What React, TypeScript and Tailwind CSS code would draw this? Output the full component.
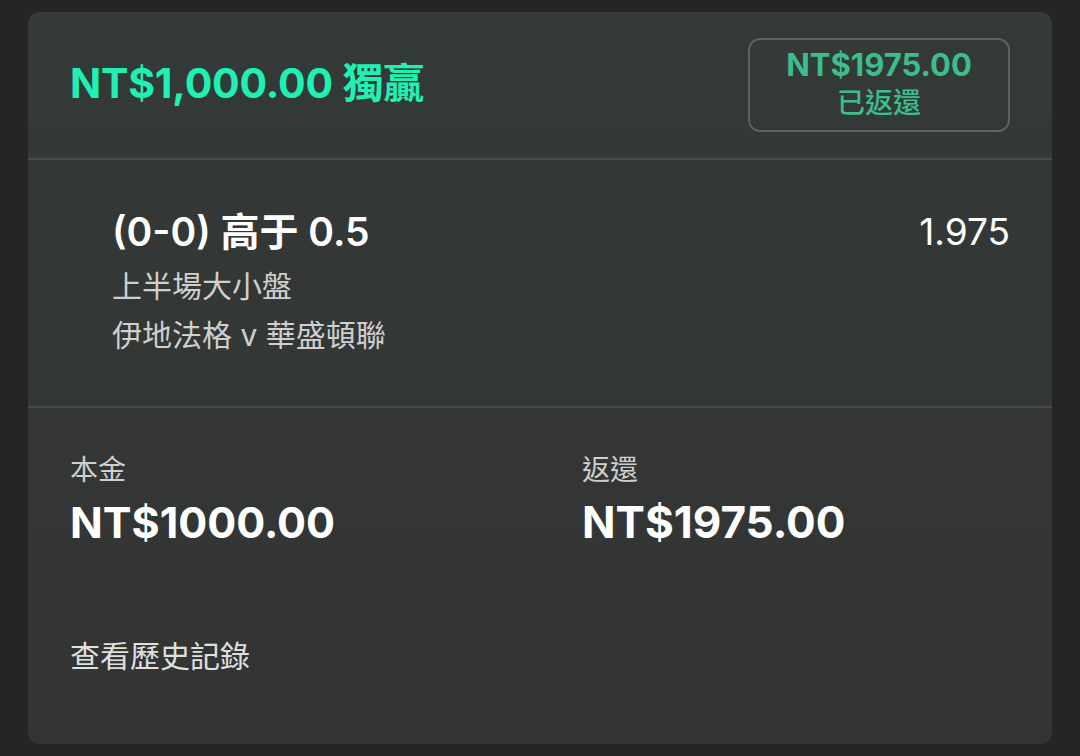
export default function App() {
  return (
    <div
      className="min-h-[756px] w-full bg-[#252525] px-[28px] pt-[12px] pb-[12px]"
      style={{ fontFamily: '"Inter", "Noto Sans CJK TC", sans-serif' }}
    >
      <div className="flex h-[732px] flex-col overflow-hidden rounded-[12px] bg-gradient-to-b from-[#333a37] to-[#333434]">
        {/* Header */}
        <div className="flex h-[148px] shrink-0 items-center justify-between border-b-2 border-[#484d4b] pl-[42px] pr-[42px]">
          <div className="-mt-[4px] text-[41px] font-bold leading-none tracking-[-0.2px] text-[#1ff0b4]">
            NT$1,000.00 獨贏
          </div>
          <div className="flex h-[94px] w-[262px] flex-col items-center justify-center rounded-[12px] border-2 border-[#5d6260]">
            <div className="-mt-[4px] text-[31px] font-bold leading-[40px] text-[#3cbd8b]">NT$1975.00</div>
            <div className="text-[28px] font-medium leading-[36px] text-[#3cbd8b]">已返還</div>
          </div>
        </div>

        {/* Selection */}
        <div className="flex h-[248px] shrink-0 items-start justify-between border-b-2 border-[#474b4a] pl-[84px] pr-[42px] pt-[48px]">
          <div className="flex flex-col">
            <div className="text-[39px] font-semibold leading-[48px] text-white">(0-0) 高于 0.5</div>
            <div className="mt-[6px] text-[30px] leading-[48px] text-[#cfcfcf]">上半場大小盤</div>
            <div className="text-[30px] leading-[50px] text-[#cfcfcf]">伊地法格 v 華盛頓聯</div>
          </div>
          <div className="text-[37px] leading-[48px] text-white">1.975</div>
        </div>

        {/* Amounts */}
        <div className="grid grid-cols-2 pt-[42px]">
          <div className="pl-[42px]">
            <div className="text-[28px] leading-[40px] text-[#cfcfcf]">本金</div>
            <div className="mt-[6px] text-[43px] font-bold leading-[52px] text-white">NT$1000.00</div>
          </div>
          <div className="pl-[42px]">
            <div className="text-[28px] leading-[40px] text-[#cfcfcf]">返還</div>
            <div className="mt-[6px] text-[44px] font-bold leading-[52px] text-white">NT$1975.00</div>
          </div>
        </div>

        <div className="pl-[42px] pt-[88px] text-[30px] leading-[40px] text-[#e0e0e0]">查看歷史記錄</div>
      </div>
    </div>
  );
}
